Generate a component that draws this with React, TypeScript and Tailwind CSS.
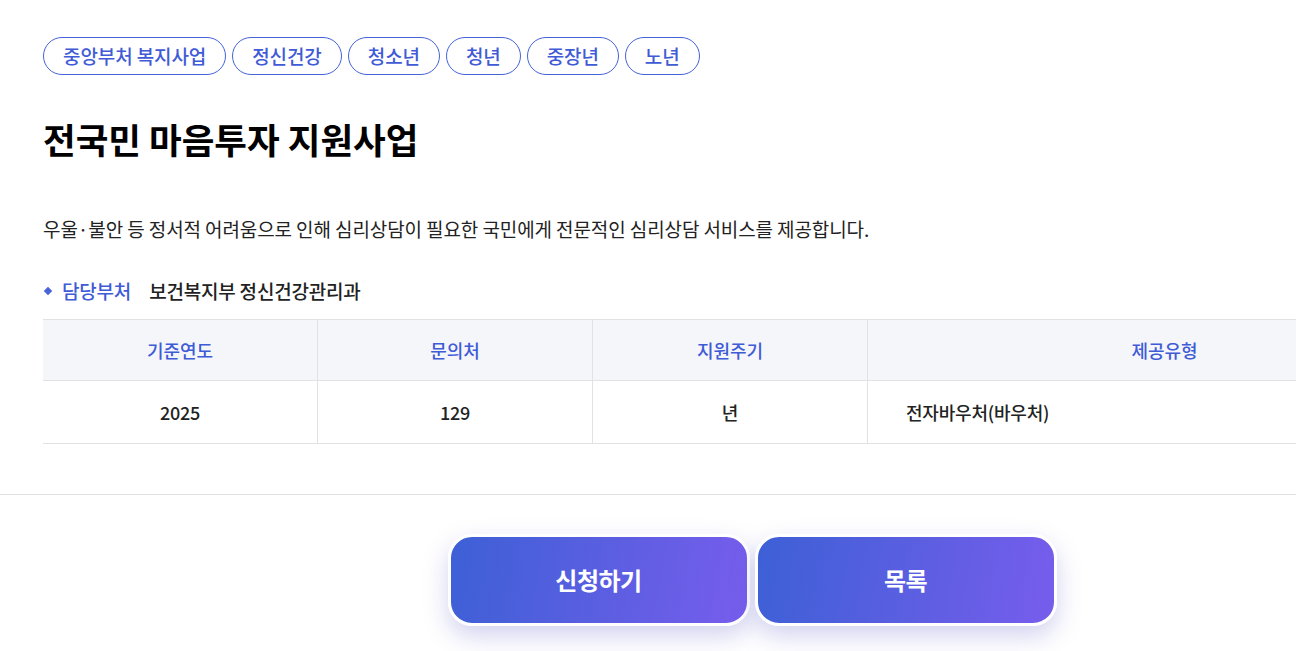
import React from 'react';

const TAGS = ['중앙부처 복지사업', '정신건강', '청소년', '청년', '중장년', '노년'];

const COLUMNS = [
  { head: '기준연도', value: '2025', align: 'center' },
  { head: '문의처', value: '129', align: 'center' },
  { head: '지원주기', value: '년', align: 'center' },
  { head: '제공유형', value: '전자바우처(바우처)', align: 'left' },
];

export default function App() {
  return (
    <div
      className="w-full min-h-screen overflow-hidden bg-white text-[#222]"
      style={{ fontFamily: '"Noto Sans CJK KR", "Noto Sans", sans-serif' }}
    >
      <div className="pt-[37px] pl-[43px]">
        <div className="w-[1418px]">
          {/* tags */}
          <div className="flex gap-[6px]">
            {TAGS.map(t => (
              <span
                key={t}
                className="h-[38px] px-[19px] flex items-center rounded-full border border-[#4463d8] text-[19px] font-medium tracking-[-0.1px] text-[#3f5bd6]"
              >
                {t}
              </span>
            ))}
          </div>

          <h1 className="mt-[41px] text-[35.5px] leading-[45px] font-bold text-black">
            전국민 마음투자 지원사업
          </h1>

          <p className="mt-[54px] text-[19px] leading-[28px] tracking-[-0.1px] text-[#222]">
            우울·불안 등 정서적 어려움으로 인해 심리상담이 필요한 국민에게 전문적인 심리상담 서비스를 제공합니다.
          </p>

          <div className="mt-[34px] flex items-center text-[19px] leading-[28px] font-medium tracking-[-0.2px]">
            <span className="ml-[2px] w-[6px] h-[6px] rotate-45 bg-[#4a63d9]" />
            <span className="ml-[11px] text-[#3f5bd6]">담당부처</span>
            <span className="ml-[18px] text-[#222]">보건복지부 정신건강관리과</span>
          </div>

          {/* info table */}
          <div className="mt-[14px] grid grid-cols-[274px_275px_275px_1fr] border-t border-b border-[#e2e2e2]">
            {COLUMNS.map((c, i) => (
              <div
                key={c.head}
                className={`h-[61px] flex items-center justify-center bg-[#f5f6fa] border-b border-[#e2e2e2] text-[18px] font-medium text-[#3f5bd6] ${i > 0 ? 'border-l' : ''}`}
              >
                {c.head}
              </div>
            ))}
            {COLUMNS.map((c, i) => (
              <div
                key={c.head + '-v'}
                className={`h-[62px] flex items-center text-[18px] font-medium tracking-[-0.2px] text-[#222] border-[#e2e2e2] ${i > 0 ? 'border-l' : ''} ${c.align === 'left' ? 'justify-start pl-[38px]' : 'justify-center'}`}
              >
                {c.value}
              </div>
            ))}
          </div>
        </div>
      </div>

      <div className="mt-[50px] border-t border-[#e2e2e2]" />

      <div className="pl-[43px] pt-[39px] pb-[30px]">
        <div className="w-[1418px] flex justify-center gap-[5px]">
          {['신청하기', '목록'].map(b => (
            <button
              key={b}
              className="w-[302px] h-[92px] rounded-[24px] border-[3px] border-white bg-[linear-gradient(100deg,#3d60d6,#775dec)] shadow-[0_10px_24px_rgba(95,95,200,0.28)] text-[24px] font-bold tracking-[-0.5px] text-white"
            >
              {b}
            </button>
          ))}
        </div>
      </div>
    </div>
  );
}
